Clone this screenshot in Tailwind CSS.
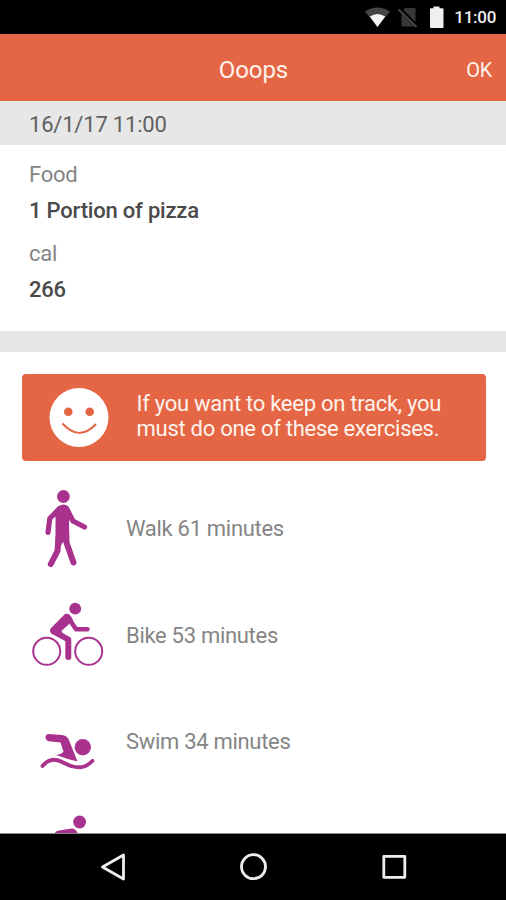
<!DOCTYPE html>
<html lang="en">
<head>
<meta charset="utf-8">
<title>Ooops</title>
<script src="https://cdn.jsdelivr.net/npm/@tailwindcss/browser@4"></script>
</head>
<body class="bg-white">
<div class="flex h-[900px] w-[506px] flex-col overflow-hidden bg-white font-['Roboto',sans-serif] text-[22px] tracking-[-0.3px] text-[#858585]">
  <div class="flex h-[34px] shrink-0 items-center justify-end bg-black pr-[10px]">
    <svg class="h-[34px] w-[92px]" viewBox="362 0 92 34">
      <path d="M365 11.5Q377.500 3.500 390 11.500L377.500 27Z" fill="#444"/>
      <path d="M369.800 16.500Q377.500 11.500 385.200 16.500L377.500 27Z" fill="#f4f4f4"/>
      <path d="M401.500 11.500L405 8H415.500V26.500H401.500Z" fill="#373737"/>
      <path d="M399.500 9L418 27.500" stroke="#000" stroke-width="4"/>
      <path d="M398.500 9.500L416.500 27" stroke="#4a4a4a" stroke-width="1.800"/>
      <path d="M430 9Q430 8.300 431 8.300H433.500V6.500H439.500V8.300H442.500Q443.500 8.300 443.500 9.300V27Q443.500 28 442.500 28H431Q430 28 430 27Z" fill="#f0f0f0"/>
    </svg>
    <span class="w-[42px] pt-[2px] text-right text-[17px] font-medium whitespace-nowrap text-[#eeeeee]">11:00</span>
  </div>
  <header class="grid h-[67px] shrink-0 grid-cols-3 items-center bg-[#e46645] pr-[14px] pl-[2px] pt-[4px] text-[#fff3ec]">
    <span></span>
    <h1 class="pl-[13px] text-center text-[24px] tracking-[-0.1px]">Ooops</h1>
    <span class="text-right text-[20px]">OK</span>
  </header>
  <div class="flex h-[44px] shrink-0 items-center bg-[#e7e7e7] pl-[29px] pt-[2px] tracking-[-0.2px] text-[#606060]">16/1/17 11:00</div>
  <section class="flex h-[186px] shrink-0 flex-col pl-[29px] pt-[16px] leading-[28px]">
    <div>Food</div>
    <div class="mt-[8px] font-medium tracking-[-0.2px] text-[#4a4a4a]">1 Portion of pizza</div>
    <div class="mt-[15px]">cal</div>
    <div class="mt-[8px] font-medium text-[#4a4a4a]">266</div>
  </section>
  <div class="h-[21px] shrink-0 bg-[#e7e7e7]"></div>
  <div class="mr-[20.500px] ml-[21.500px] mt-[22px] flex h-[87px] shrink-0 items-center rounded-[4px] bg-[#e46645] pl-[27.500px] text-[#fff3ec]">
    <svg class="size-[60px]" viewBox="0 0 60 60">
      <circle cx="30" cy="29.500" r="29.500" fill="#fff"/>
      <circle cx="19.300" cy="23.800" r="4.300" fill="#e46645"/><circle cx="40.700" cy="23.800" r="4.300" fill="#e46645"/>
      <path d="M13.500 35.500Q30 54 47 36" fill="none" stroke="#e46645" stroke-width="2"/>
    </svg>
    <p class="pb-[4px] pl-[27.500px] leading-[25px] tracking-[-0.270px]">If you want to keep on track, you<br>must do one of these exercises.</p>
  </div>
  <ul class="min-h-0 flex-1 overflow-hidden pt-[14.500px]">
    <li class="flex h-[106.500px] items-center pl-[20px]">
      <svg class="h-[106.500px] w-[106px]" viewBox="20 475.500 106 106.500" fill="none" stroke="#a8328e" stroke-linecap="round" stroke-linejoin="round">
        <circle cx="63.400" cy="496" r="6.400" fill="#a8328e" stroke="none"/>
        <path d="M59.500 508L49.800 518L48 532M67 509L73 520.500L84.500 526.500" stroke-width="5.200"/>
        <path d="M58.500 537L57.500 550.500L50.800 563.500M65 538L73.500 562" stroke-width="6"/>
        <path d="M59.500 506.500Q63.400 503.500 67.500 506.500L70 512L68 522L68.500 541L63 539L60.500 544L56.500 543V515L53 515.500Z" fill="#a8328e" stroke-width="2"/>
      </svg>
      <span>Walk 61 minutes</span>
    </li>
    <li class="flex h-[106.500px] items-center pl-[20px]">
      <svg class="h-[106.500px] w-[106px]" viewBox="20 582 106 106.500" fill="none" stroke="#a8328e" stroke-linecap="round" stroke-linejoin="round">
        <circle cx="46.700" cy="651.300" r="13.500" stroke-width="2"/><circle cx="88.700" cy="651.300" r="13.500" stroke-width="2"/>
        <circle cx="75.200" cy="608.700" r="5.900" fill="#a8328e" stroke="none"/>
        <path d="M68 617L76 629.200H87.500" stroke-width="4.500"/>
        <path d="M66 615.500L52 629.500Q51 632 54 633L62 637L59.500 630.500L71 620Q69 615 66 615.500Z" fill="#a8328e" stroke-width="3.500"/>
        <path d="M54 631.500L68.300 639.500V657" stroke-width="6"/>
      </svg>
      <span>Bike 53 minutes</span>
    </li>
    <li class="flex h-[106.500px] items-center pl-[20px]">
      <svg class="h-[106.500px] w-[106px]" viewBox="20 688.500 106 106.500" fill="none" stroke="#a8328e" stroke-linecap="round" stroke-linejoin="round">
        <circle cx="82.800" cy="746.700" r="8.200" fill="#a8328e" stroke="none"/>
        <path d="M48.500 733.500L62 734.500Q66.500 735 68.500 738.500L77.500 761Q67 758.500 56 754.500Q62 753.500 63.500 751L60.500 742L48.500 740.800Q45.300 739.500 45.500 736.800Q46 733.500 48.500 733.500Z" fill="#a8328e" stroke="none"/>
        <path d="M42.500 765.500C48 759 54 757.500 61 761C68 764.500 76 768.500 84 766C88 765 90 763 92.500 760.300" stroke-width="3.800"/>
      </svg>
      <span>Swim 34 minutes</span>
    </li>
    <li class="flex h-[106.500px] items-center pl-[20px]">
      <svg class="h-[106.500px] w-[106px]" viewBox="20 795 106 106.500" fill="#a8328e">
        <circle cx="79.600" cy="822" r="6.400"/>
        <path d="M54 835Q55 830.500 59 830.500L72 828.500Q76 828.500 78 834V836H54Z"/>
      </svg>
    </li>
  </ul>
  <nav class="h-[67px] shrink-0 border-t border-[#888] bg-black">
    <svg class="h-[66px] w-[506px]" viewBox="0 834 506 66" fill="none" stroke="#eee" stroke-width="2.800" stroke-linejoin="round">
      <path d="M102.500 867L123.500 855V879Z"/>
      <circle cx="253.500" cy="866.700" r="12"/>
      <rect x="383.800" y="856.300" width="21" height="21"/>
    </svg>
  </nav>
</div>
</body>
</html>
